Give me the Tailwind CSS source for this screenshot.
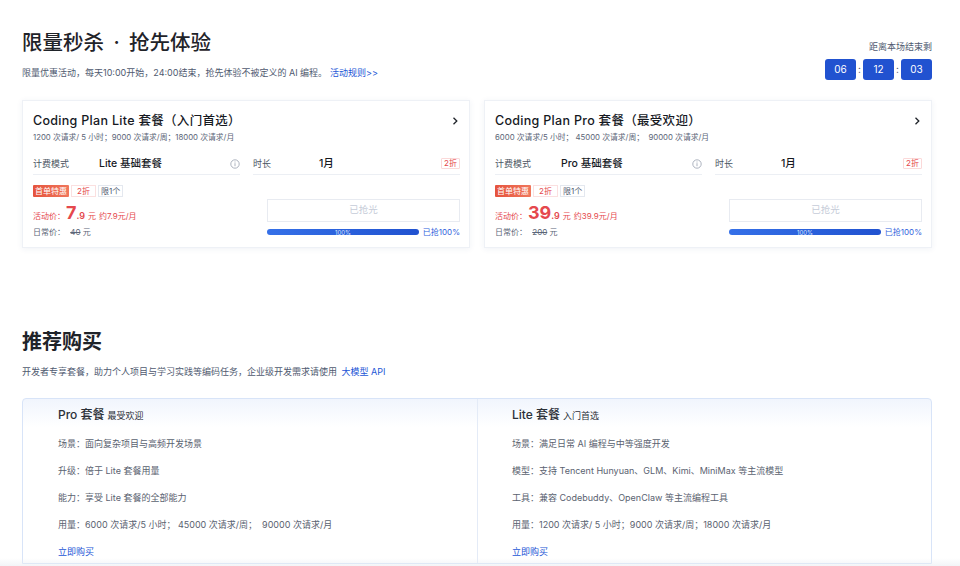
<!DOCTYPE html>
<html lang="zh-CN">
<head>
    <meta charset="UTF-8">
    <meta name="viewport" content="width=device-width, initial-scale=1.0">
    <title>Coding Plan</title>
    <script src="https://cdn.jsdelivr.net/npm/@tailwindcss/browser@4"></script>
</head>
<body class="bg-white h-[566px] overflow-hidden relative font-['Inter','Noto_Sans_CJK_SC',sans-serif] text-[#16191f]">
    <div class="pl-[22px] pr-[28px]">
        <!-- Flash sale header -->
        <div class="flex justify-between pt-[29px] h-[100px]">
            <div>
                <h1 class="text-[20.5px] leading-[28px] font-medium text-[#1f2329]">限量秒杀<span class="inline-block w-[25px] text-center">·</span>抢先体验</h1>
                <p class="mt-[8px] text-[9px] leading-[16px] text-[#4f5a70]">限量优惠活动，每天10:00开始，24:00结束，抢先体验不被定义的 AI 编程。<a class="ml-[3px] text-[#2356d6]">活动规则&gt;&gt;</a></p>
            </div>
            <div class="flex flex-col items-end pt-[11px]">
                <div class="text-[9px] leading-[14px] text-[#4f5a70]">距离本场结束剩</div>
                <div class="flex items-center mt-[5px] text-[10px] text-white">
                    <span class="w-[31px] h-[21px] rounded-[3px] bg-[#2152d0] flex items-center justify-center">06</span>
                    <span class="w-[7px] text-center text-[#4f5a70]">:</span>
                    <span class="w-[31px] h-[21px] rounded-[3px] bg-[#2152d0] flex items-center justify-center">12</span>
                    <span class="w-[7px] text-center text-[#4f5a70]">:</span>
                    <span class="w-[31px] h-[21px] rounded-[3px] bg-[#2152d0] flex items-center justify-center">03</span>
                </div>
            </div>
        </div>

        <!-- Plan cards -->
        <div class="grid grid-cols-2 gap-[14px]">
            <div class="h-[148px] border border-[#eef1f6] shadow-[0_1px_6px_rgba(40,70,130,0.07)] pl-[10px] pr-[9px] pt-[11px]">
                <div class="flex items-center justify-between">
                    <h2 class="text-[12.5px] tracking-[0.3px] leading-[18px] font-medium">Coding Plan Lite 套餐（入门首选）</h2>
                    <svg class="w-[10px] h-[10px]" viewBox="0 0 10 10" fill="none" stroke="#1f2329" stroke-width="1.3"><path d="M3.5 1.8 6.8 5 3.5 8.2"/></svg>
                </div>
                <p class="text-[7.8px] leading-[14px] text-[#5c6678]">1200 次请求/ 5 小时；9000 次请求/周；18000 次请求/月</p>
                <div class="grid grid-cols-2 gap-[13px] mt-[7px]">
                    <div class="flex items-center h-[24px] pt-[2px] border-b border-[#eceff4]">
                        <span class="w-[66px] text-[9px] text-[#4b5563]">计费模式</span>
                        <span class="flex-1 text-[10.5px] font-medium">Lite 基础套餐</span>
                        <svg class="w-[10px] h-[10px]" viewBox="0 0 10 10" fill="none" stroke="#8b94a5" stroke-width=".7"><circle cx="5" cy="5" r="4.2"/><path d="M5 4.2v3M5 2.5v1"/></svg>
                    </div>
                    <div class="flex items-center h-[24px] pt-[2px] border-b border-[#eceff4]">
                        <span class="w-[66px] text-[9px] text-[#4b5563]">时长</span>
                        <span class="flex-1 text-[10.5px] font-medium">1月</span>
                        <span class="border border-[#fbd9d9] rounded-[1px] px-[2px] text-[8px] leading-[9px] text-[#e5484d]">2折</span>
                    </div>
                </div>
                <div class="flex justify-between mt-[10px]">
                    <div>
                        <div class="flex items-center gap-[2px] text-[8px] leading-[10px]">
                            <span class="px-[2px] py-[1px] rounded-[1px] bg-gradient-to-r from-[#e5533d] to-[#f0775c] text-white">首单特惠</span>
                            <span class="w-[25px] text-center border border-[#fbe0e0] text-[#e5484d]">2折</span>
                            <span class="px-[2px] border border-[#e4e8ef] text-[#4f5a70]">限1个</span>
                        </div>
                        <div class="flex items-baseline mt-[5px] text-[#e5484d] text-[8px] leading-[22px]">
                            <span>活动价：</span>
                            <span class="text-[18px] font-bold ml-[1px]">7</span><span class="text-[9px] font-semibold">.9</span>
                            <span class="ml-[3px]">元</span>
                            <span class="ml-[3px]">约7.9元/月</span>
                        </div>
                        <div class="-mt-[1px] text-[8px] leading-[12px] text-[#5c6678]">日常价： <span class="ml-[3px] line-through">40</span> 元</div>
                    </div>
                    <div class="w-[193px] pt-[14px]">
                        <div class="h-[23px] border border-[#e8ebf1] flex items-center justify-center text-[9.5px] text-[#c6ccd8]">已抢光</div>
                        <div class="flex items-center justify-between mt-[5px]">
                            <div class="w-[152px] h-[6px] rounded-full bg-gradient-to-r from-[#3570e8] to-[#2152d0] flex items-center justify-center text-[6px] text-[#dbe6ff]">100%</div>
                            <span class="text-[8px] leading-[10px] text-[#2f62dc]">已抢100%</span>
                        </div>
                    </div>
                </div>
            </div>

            <div class="h-[148px] border border-[#eef1f6] shadow-[0_1px_6px_rgba(40,70,130,0.07)] pl-[10px] pr-[9px] pt-[11px]">
                <div class="flex items-center justify-between">
                    <h2 class="text-[12.5px] tracking-[0.3px] leading-[18px] font-medium">Coding Plan Pro 套餐（最受欢迎）</h2>
                    <svg class="w-[10px] h-[10px]" viewBox="0 0 10 10" fill="none" stroke="#1f2329" stroke-width="1.3"><path d="M3.5 1.8 6.8 5 3.5 8.2"/></svg>
                </div>
                <p class="text-[7.8px] leading-[14px] text-[#5c6678]">6000 次请求/5 小时； 45000 次请求/周； &nbsp;90000 次请求/月</p>
                <div class="grid grid-cols-2 gap-[13px] mt-[7px]">
                    <div class="flex items-center h-[24px] pt-[2px] border-b border-[#eceff4]">
                        <span class="w-[66px] text-[9px] text-[#4b5563]">计费模式</span>
                        <span class="flex-1 text-[10.5px] font-medium">Pro 基础套餐</span>
                        <svg class="w-[10px] h-[10px]" viewBox="0 0 10 10" fill="none" stroke="#8b94a5" stroke-width=".7"><circle cx="5" cy="5" r="4.2"/><path d="M5 4.2v3M5 2.5v1"/></svg>
                    </div>
                    <div class="flex items-center h-[24px] pt-[2px] border-b border-[#eceff4]">
                        <span class="w-[66px] text-[9px] text-[#4b5563]">时长</span>
                        <span class="flex-1 text-[10.5px] font-medium">1月</span>
                        <span class="border border-[#fbd9d9] rounded-[1px] px-[2px] text-[8px] leading-[9px] text-[#e5484d]">2折</span>
                    </div>
                </div>
                <div class="flex justify-between mt-[10px]">
                    <div>
                        <div class="flex items-center gap-[2px] text-[8px] leading-[10px]">
                            <span class="px-[2px] py-[1px] rounded-[1px] bg-gradient-to-r from-[#e5533d] to-[#f0775c] text-white">首单特惠</span>
                            <span class="w-[25px] text-center border border-[#fbe0e0] text-[#e5484d]">2折</span>
                            <span class="px-[2px] border border-[#e4e8ef] text-[#4f5a70]">限1个</span>
                        </div>
                        <div class="flex items-baseline mt-[5px] text-[#e5484d] text-[8px] leading-[22px]">
                            <span>活动价：</span>
                            <span class="text-[18px] font-bold ml-[1px]">39</span><span class="text-[9px] font-semibold">.9</span>
                            <span class="ml-[3px]">元</span>
                            <span class="ml-[3px]">约39.9元/月</span>
                        </div>
                        <div class="-mt-[1px] text-[8px] leading-[12px] text-[#5c6678]">日常价： <span class="ml-[3px] line-through">200</span> 元</div>
                    </div>
                    <div class="w-[193px] pt-[14px]">
                        <div class="h-[23px] border border-[#e8ebf1] flex items-center justify-center text-[9.5px] text-[#c6ccd8]">已抢光</div>
                        <div class="flex items-center justify-between mt-[5px]">
                            <div class="w-[152px] h-[6px] rounded-full bg-gradient-to-r from-[#3570e8] to-[#2152d0] flex items-center justify-center text-[6px] text-[#dbe6ff]">100%</div>
                            <span class="text-[8px] leading-[10px] text-[#2f62dc]">已抢100%</span>
                        </div>
                    </div>
                </div>
            </div>
        </div>

        <!-- Recommended -->
        <h1 class="mt-[80px] text-[20px] leading-[28px] font-semibold text-[#1f2329]">推荐购买</h1>
        <p class="mt-[8px] text-[9px] leading-[16px] text-[#4f5a70]">开发者专享套餐，助力个人项目与学习实践等编码任务，企业级开发需求请使用 <a class="ml-[2px] text-[#2356d6]">大模型 API</a></p>

        <div class="mt-[18px] h-[166px] grid grid-cols-[455px_1fr] border border-[#d8e4f8] rounded-t-[4px] bg-gradient-to-b from-[#f1f5fd] to-white to-[28px] text-[9px] text-[#5a6270]">
            <div class="pl-[35px] pt-[8px] border-r border-[#e4ebf7]">
                <div class="flex items-baseline gap-[3px] leading-[16px] text-[#2b3038]"><span class="text-[12px] font-medium">Pro 套餐</span><span class="text-[9px]">最受欢迎</span></div>
                <div class="mt-[13px] flex flex-col gap-[13px] leading-[14px]">
                    <p>场景：面向复杂项目与高频开发场景</p>
                    <p>升级：倍于 Lite 套餐用量</p>
                    <p>能力：享受 Lite 套餐的全部能力</p>
                    <p>用量：6000 次请求/5 小时； 45000 次请求/周； &nbsp;90000 次请求/月</p>
                    <a class="text-[#2356d6]">立即购买</a>
                </div>
            </div>
            <div class="pl-[34px] pt-[8px]">
                <div class="flex items-baseline gap-[3px] leading-[16px] text-[#2b3038]"><span class="text-[12px] font-medium">Lite 套餐</span><span class="text-[9px]">入门首选</span></div>
                <div class="mt-[13px] flex flex-col gap-[13px] leading-[14px]">
                    <p>场景：满足日常 AI 编程与中等强度开发</p>
                    <p>模型：支持 Tencent Hunyuan、GLM、Kimi、MiniMax 等主流模型</p>
                    <p>工具：兼容 Codebuddy、OpenClaw 等主流编程工具</p>
                    <p>用量：1200 次请求/ 5 小时；9000 次请求/周；18000 次请求/月</p>
                    <a class="text-[#2356d6]">立即购买</a>
                </div>
            </div>
        </div>
    </div>
    <!-- bottom fade over the page edge -->
    <div class="absolute bottom-0 inset-x-0 h-[8px] bg-gradient-to-b from-transparent to-[#e9edf2]/60"></div>
</body>
</html>
